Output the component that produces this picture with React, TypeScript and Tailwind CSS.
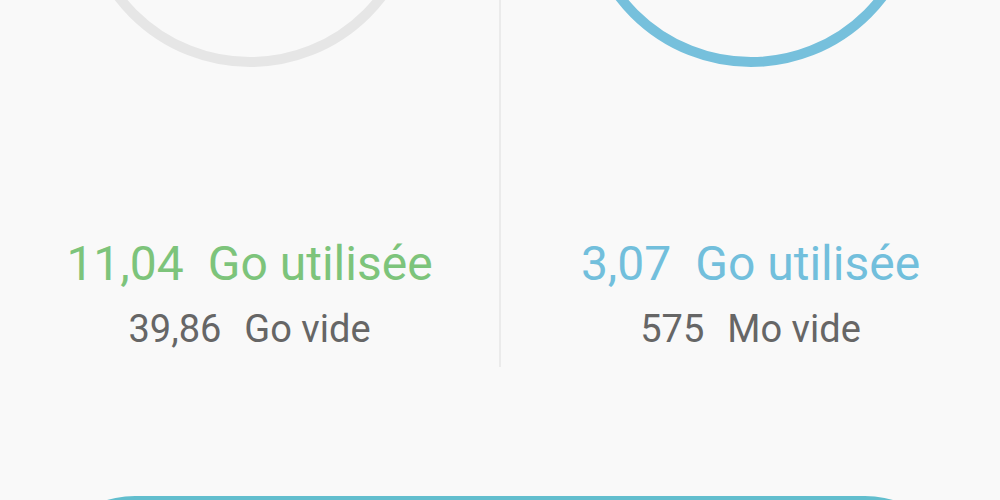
const stats = [
  {
    id: 'internal',
    used: '11,04',
    usedUnit: 'Go utilisée',
    free: '39,86',
    freeUnit: 'Go vide',
    ring: 'border-[#e6e6e6]',
    accent: 'text-[#7dc47b]',
  },
  {
    id: 'sd',
    used: '3,07',
    usedUnit: 'Go utilisée',
    free: '575',
    freeUnit: 'Mo vide',
    ring: 'border-[#76c0dc]',
    accent: 'text-[#72bfdc]',
  },
];

function StorageColumn({ s }: { s: (typeof stats)[number] }) {
  return (
    <div className="flex-1 flex flex-col items-center">
      {/* ring, mostly scrolled above the fold */}
      <div className={`w-[340px] h-[340px] shrink-0 rounded-full border-[10px] -mt-[273px] ${s.ring}`}></div>
      <div className={`mt-[169px] text-[48px] leading-[56px] whitespace-nowrap ${s.accent}`}>
        <span>{s.used}</span>
        <span className="ml-[24px]">{s.usedUnit}</span>
      </div>
      <div className="mt-[15px] text-[38px] leading-[44px] text-[#666666] whitespace-nowrap">
        <span>{s.free}</span>
        <span className="ml-[23px]">{s.freeUnit}</span>
      </div>
    </div>
  );
}

export default function App() {
  return (
    <div className="w-[1000px] h-[500px] overflow-hidden bg-[#f9f9f9] font-['Roboto','Liberation_Sans',sans-serif]">
      <div className="flex h-[367px]">
        <StorageColumn s={stats[0]} />
        <div className="w-[2px] bg-[#ebebeb] shrink-0"></div>
        <StorageColumn s={stats[1]} />
      </div>

      {/* action button, cut off by the bottom edge */}
      <div className="mt-[129px] mx-auto w-[930px] h-[220px] rounded-[100px] bg-[#62bece]"></div>
    </div>
  );
}
